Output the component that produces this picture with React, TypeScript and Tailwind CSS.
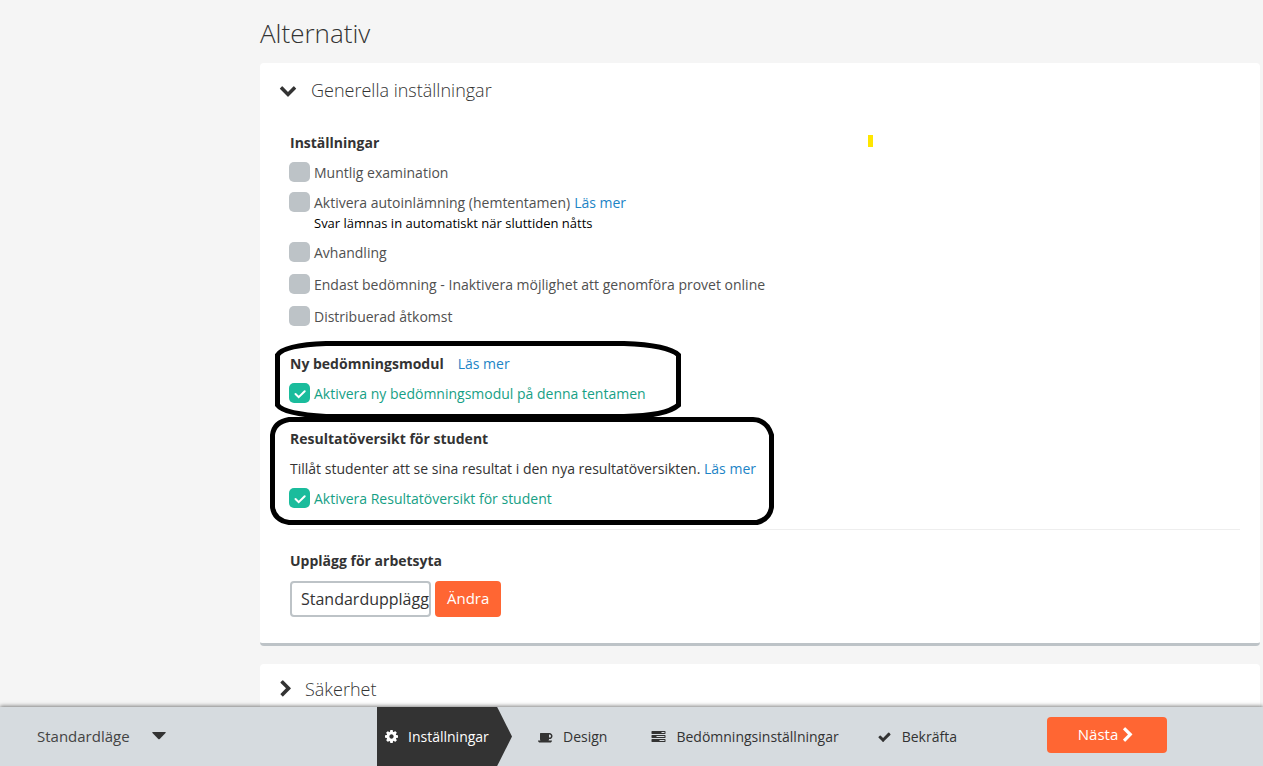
import { useState } from 'react'
import type { ReactNode } from 'react'

const paths = {
  cog: 'M1024 896q0-106-75-181t-181-75-181 75-75 181 75 181 181 75 181-75 75-181zm512-109v222q0 12-8 23t-20 13l-185 28q-19 54-39 91 35 50 107 138 10 12 10 25t-9 23q-27 37-99 108t-94 71q-12 0-26-9l-138-108q-44 23-91 38-16 136-29 186-7 28-36 28h-222q-14 0-24.5-8.5t-11.5-21.5l-28-184q-49-16-90-37l-141 107q-10 9-25 9-14 0-25-11-126-114-165-168-7-10-7-23 0-12 8-23 15-21 51-66.5t54-70.5q-27-50-41-99l-183-27q-13-2-21-12.5t-8-23.5v-222q0-12 8-23t19-13l186-28q14-46 39-92-40-57-107-138-10-12-10-24 0-10 9-23 26-36 98.5-107.5t94.5-71.5q13 0 26 10l138 107q44-23 91-38 16-136 29-186 7-28 36-28h222q14 0 24.5 8.5t11.5 21.5l28 184q49 16 90 37l142-107q9-9 24-9 13 0 25 10 129 119 165 170 7 8 7 22 0 12-8 23-15 21-51 66.5t-54 70.5q26 50 41 98l183 28q13 2 21 12.5t8 23.5z',
  coffee: 'M1664 776q0-80-56-136t-136-56h-64v384h64q80 0 136-56t56-136zm-1664 576h1792q0 106-75 181t-181 75h-1280q-106 0-181-75t-75-181zm1856-576q0 159-112.5 271.5t-271.5 112.5h-64v32q0 92-66 158t-158 66h-704q-92 0-158-66t-66-158v-736q0-26 19-45t45-19h1152q159 0 271.5 112.5t112.5 271.5z',
  tasks: 'M1024 1408h640v-128h-640v128zm-384-512h1024v-128h-1024v128zm640-512h384v-128h-384v128zm512 832v256q0 26-19 45t-45 19h-1664q-26 0-45-19t-19-45v-256q0-26 19-45t45-19h1664q26 0 45 19t19 45zm0-512v256q0 26-19 45t-45 19h-1664q-26 0-45-19t-19-45v-256q0-26 19-45t45-19h1664q26 0 45 19t19 45zm0-512v256q0 26-19 45t-45 19h-1664q-26 0-45-19t-19-45v-256q0-26 19-45t45-19h1664q26 0 45 19t19 45z',
  check: 'M1671 566q0 40-28 68l-724 724-136 136q-28 28-68 28t-68-28l-136-136-362-362q-28-28-28-68t28-68l136-136q28-28 68-28t68 28l294 295 656-657q28-28 68-28t68 28l136 136q28 28 28 68z',
  down: 'M1683 808l-742 741q-19 19-45 19t-45-19l-742-741q-19-19-19-45.5t19-45.5l166-165q19-19 45-19t45 19l531 531 531-531q19-19 45-19t45 19l166 165q19 19 19 45.5t-19 45.5z',
  right: 'M1363 877l-742 742q-19 19-45 19t-45-19l-166-166q-19-19-19-45t19-45l531-531-531-531q-19-19-19-45t19-45l166-166q19-19 45-19t45 19l742 742q19 19 19 45t-19 45z',
}

function Icon({ name, box = '0 0 1792 1792', className }: { name: keyof typeof paths; box?: string; className: string }) {
  return (
    <svg viewBox={box} fill="currentColor" aria-hidden="true" className={className}>
      <path d={paths[name]} />
    </svg>
  )
}

function ReadMore() {
  return <a href="#" className="text-[#1c84c6] hover:underline">Läs mer</a>
}

function Check({ id, label, on = false, tall = false, children }: { id: string; label: string; on?: boolean; tall?: boolean; children?: ReactNode }) {
  const [checked, setChecked] = useState(on)
  return (
    <div className={tall ? 'flex h-8 items-center' : 'flex h-[30px] items-center'}>
      <span className="relative mr-1 mb-0.5 -ml-px flex">
        <input
          id={id}
          type="checkbox"
          checked={checked}
          onChange={(e) => setChecked(e.target.checked)}
          className="h-5 w-[21px] appearance-none rounded-[5px] bg-[#bdc3c7] checked:bg-[#1abc9c]"
        />
        {checked && (
          <svg viewBox="0 0 21 20" aria-hidden="true" className="pointer-events-none absolute inset-0 h-5 w-[21px]">
            <path d="M6.5 11l3.2 3.2 6-6" fill="none" stroke="#fff" strokeWidth="2" strokeLinecap="round" />
          </svg>
        )}
      </span>
      <label htmlFor={id} className={checked ? 'text-[#16a085]' : 'text-[#505050]'}>{label}</label>
      {children}
    </div>
  )
}

function Step({ icon, box, label }: { icon: keyof typeof paths; box?: string; label: string }) {
  return (
    <a href="#" className="flex items-center">
      <Icon name={icon} box={box} className="mr-[10px] h-[14px] w-[15px]" />
      {label}
    </a>
  )
}

export default function App() {
  return (
    <div className="flex h-screen flex-col bg-[#f5f5f5] font-['Open_Sans',sans-serif] text-sm text-[#333]">
      <main className="min-h-0 flex-1 overflow-hidden pr-[3px] pl-[260px]">
        <h1 className="pt-4 pb-[13px] text-[26px] leading-[34px] font-light">Alternativ</h1>

        <section className="relative rounded border-b-3 border-[#bdc3c7] bg-white pr-5 pb-[26px] pl-[30px]">
          <h2 className="mb-[11px] -ml-[11px] text-lg font-light">
            <button className="flex h-[54px] items-center">
              <Icon name="down" className="mr-[14px] size-[18px]" />
              Generella inställningar
            </button>
          </h2>

          <h3 className="leading-[30px] font-bold">Inställningar</h3>
          <Check id="oral" label="Muntlig examination" />
          <Check id="auto" label="Aktivera autoinlämning (hemtentamen)">
            <span className="ml-1"><ReadMore /></span>
          </Check>
          <p className="mb-[9px] ml-6 text-[13px] leading-[10px] text-black">Svar lämnas in automatiskt när sluttiden nåtts</p>
          <Check id="thesis" label="Avhandling" tall />
          <Check id="grading" label="Endast bedömning - Inaktivera möjlighet att genomföra provet online" tall />
          <Check id="distributed" label="Distribuerad åtkomst" tall />

          <div className="mt-4 flex leading-[30px]">
            <h3 className="mr-[14px] font-bold">Ny bedömningsmodul</h3>
            <ReadMore />
          </div>
          <Check id="module" label="Aktivera ny bedömningsmodul på denna tentamen" on />

          <h3 className="mt-[15px] leading-[30px] font-bold">Resultatöversikt för student</h3>
          <p className="leading-[30px]">Tillåt studenter att se sina resultat i den nya resultatöversikten. <ReadMore /></p>
          <Check id="results" label="Aktivera Resultatöversikt för student" on />

          <hr className="mt-[15px] mb-4 border-[#eee]" />
          <label htmlFor="layout" className="block leading-[30px] font-bold">Upplägg för arbetsyta</label>
          <div className="mt-[5px] flex gap-1">
            <input
              id="layout"
              readOnly
              defaultValue="Standardupplägg"
              className="h-9 w-[141px] rounded border-2 border-[#bdc3c7] pl-[9px] text-base"
            />
            <button className="h-9 rounded bg-[#ff6633] px-3 text-[15px] text-white">Ändra</button>
          </div>

          {/* hand-drawn markers */}
          <svg viewBox="0 0 520 200" fill="none" stroke="#000" strokeWidth="5" aria-hidden="true" className="pointer-events-none absolute top-[272px] left-0 h-[200px] w-[520px]">
            <path d="M66 8.5H364Q408 10 418.500 20V70Q406 81 364 81.500H66Q24 79 17.500 70V20Q24 10 66 8.500Z" />
            <path d="M29 84.500H493Q507 85 511.500 100V172Q510 184 497 187.500H29Q14 185 12.500 172V100Q14 87 29 84.500Z" />
          </svg>
          <span className="absolute top-[72px] left-[608px] h-3 w-[5px] bg-[#ffe600]" />
        </section>

        <section className="mt-[18px] rounded bg-white pl-[17px]">
          <h2 className="text-lg font-light">
            <button className="flex h-[50px] items-center">
              <Icon name="right" className="mr-[10px] size-[18px]" />
              Säkerhet
            </button>
          </h2>
        </section>
      </main>

      <footer className="relative flex h-[59px] shrink-0 items-center bg-[#d6dbdf] shadow-[0_-1px_4px_rgba(0,0,0,0.5)]">
        <button className="flex w-[377px] items-center pl-[37px] text-[15px] text-[#444]">
          Standardläge
          <svg viewBox="0 0 14 8" fill="#333" aria-hidden="true" className="ml-[22px] h-2 w-[14px]">
            <path d="M.5 0h13q.5.4 0 1L7.700 7q-.7.6-1.400 0L.5 1Q0 .4.5 0z" />
          </svg>
        </button>
        <nav className="flex items-center self-stretch">
          <a href="#" className="mr-[26px] flex w-[135px] items-center self-stretch bg-[#333] pl-2 text-white [clip-path:polygon(0_0,89%_0,100%_50%,89%_100%,0_100%)]">
            <Icon name="cog" box="0 128 1536 1536" className="mr-[10px] size-[13px]" />
            Inställningar
          </a>
          <div className="flex">
            <Step icon="coffee" box="0 0 1920 1792" label="Design" />
            <span className="w-11" />
            <Step icon="tasks" label="Bedömningsinställningar" />
            <span className="w-[38px]" />
            <Step icon="check" label="Bekräfta" />
          </div>
        </nav>
        <button className="mr-24 mb-1 ml-auto flex h-9 w-[120px] items-center justify-center gap-0.5 rounded bg-[#ff6633] text-[15px] text-white">
          Nästa
          <Icon name="right" className="size-4" />
        </button>
      </footer>
    </div>
  )
}
